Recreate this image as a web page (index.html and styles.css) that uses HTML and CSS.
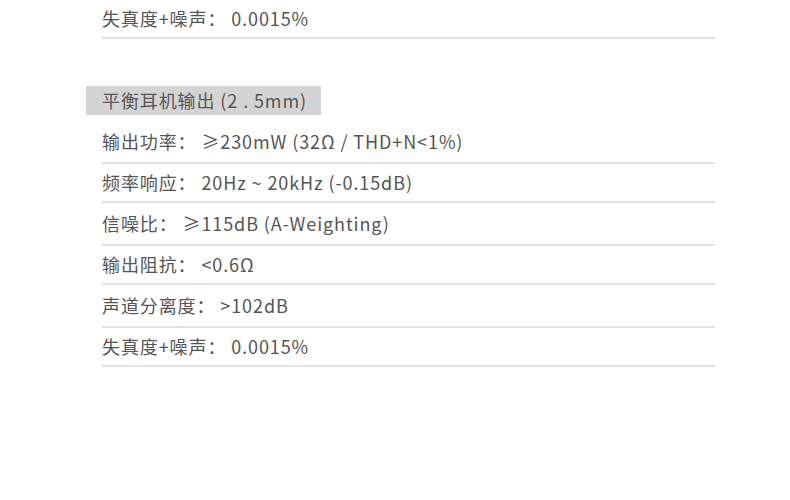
FILE: index.html
```html
<!DOCTYPE html>
<html lang="zh-CN">
<head>
<meta charset="utf-8">
<link rel="stylesheet" href="styles.css">
</head>
<body>
<div class="page">
  <ul class="specs">
    <li class="row">失真度+噪声： 0.0015%</li>
  </ul>
  <div class="section-title">平衡耳机输出 (2 . 5mm)</div>
  <ul class="specs">
    <li class="row row-tall">输出功率： ≥230mW (32Ω / THD+N&lt;1%)</li>
    <li class="row">频率响应： 20Hz ~ 20kHz (-0.15dB)</li>
    <li class="row row-tall">信噪比： ≥115dB (A-Weighting)</li>
    <li class="row">输出阻抗： &lt;0.6Ω</li>
    <li class="row row-tall">声道分离度： &gt;102dB</li>
    <li class="row">失真度+噪声： 0.0015%</li>
  </ul>
</div>
</body>
</html>
```
FILE: styles.css
```css
html, body {
  margin: 0;
  padding: 0;
  background: #ffffff;
}
.page {
  width: 790px;
  font-family: "Noto Sans CJK SC", "Noto Sans", sans-serif;
  font-weight: 400;
  font-size: 18px;
  letter-spacing: 0.9px;
  color: #555555;
}
.specs {
  list-style: none;
  margin: 0 0 0 102px;
  padding: 0;
  width: 613px;
}
.row {
  line-height: 24px;
  padding: 6px 0 7px;
  border-bottom: 2px solid #e2e2e2;
}
.row-tall {
  padding-top: 7.5px;
  padding-bottom: 9.5px;
}
.section-title {
  margin: 47px 0 6px 86px;
  width: 219px;
  height: 29px;
  line-height: 29px;
  padding-left: 16px;
  background: #d4d4d4;
}
```
